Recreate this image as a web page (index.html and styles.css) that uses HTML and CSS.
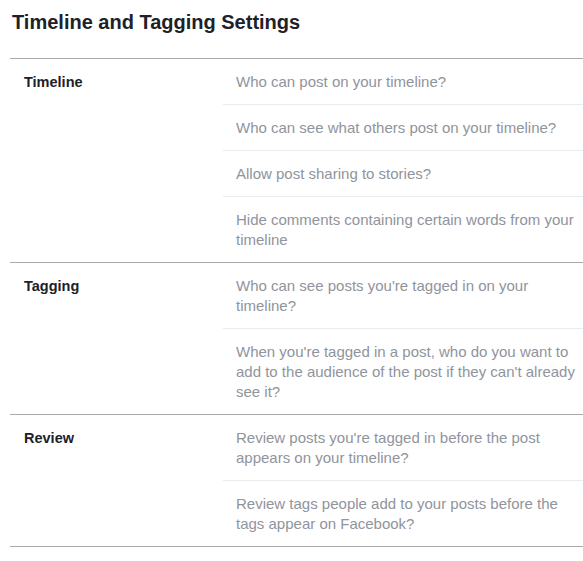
FILE: index.html
```html
<!DOCTYPE html>
<html>
<head>
<meta charset="utf-8">
<link rel="stylesheet" href="styles.css">
</head>
<body>
<div class="page">
  <h1 class="title">Timeline and Tagging Settings</h1>
  <div class="settings">
    <section class="group">
      <div class="label">Timeline</div>
      <ul class="items">
        <li>Who can post on your timeline?</li>
        <li>Who can see what others post on your timeline?</li>
        <li>Allow post sharing to stories?</li>
        <li>Hide comments containing certain words from your timeline</li>
      </ul>
    </section>
    <section class="group">
      <div class="label">Tagging</div>
      <ul class="items">
        <li>Who can see posts you're tagged in on your timeline?</li>
        <li>When you're tagged in a post, who do you want to add to the audience of the post if they can't already see it?</li>
      </ul>
    </section>
    <section class="group">
      <div class="label">Review</div>
      <ul class="items">
        <li>Review posts you're tagged in before the post appears on your timeline?</li>
        <li>Review tags people add to your posts before the tags appear on Facebook?</li>
      </ul>
    </section>
  </div>
</div>
</body>
</html>
```
FILE: styles.css
```css
html, body {
  margin: 0;
  padding: 0;
  background: #ffffff;
}
body {
  font-family: "Liberation Sans", Arial, sans-serif;
  font-size: 15px;
  line-height: 20px;
  color: #1d2129;
}
.page {
  padding: 10px 0 0 10px;
  width: 573px;
}
.title {
  margin: 0 0 24px 2px;
  font-size: 20px;
  line-height: 24px;
  font-weight: bold;
  color: #1d2129;
}
.settings {
  border-bottom: 1px solid #aaaaaa;
}
.group {
  display: grid;
  grid-template-columns: 213px 1fr;
  border-top: 1px solid #aaaaaa;
}
.label {
  padding: 13px 0 0 14px;
  font-size: 14.5px;
  font-weight: bold;
  color: #1d2129;
}
.items {
  list-style: none;
  margin: 0;
  padding: 0;
}
.items li {
  padding: 13px 4px 12px 13px;
  color: #90949c;
  border-bottom: 1px solid #e9ebee;
}
.items li:last-child {
  border-bottom: none;
}
```
